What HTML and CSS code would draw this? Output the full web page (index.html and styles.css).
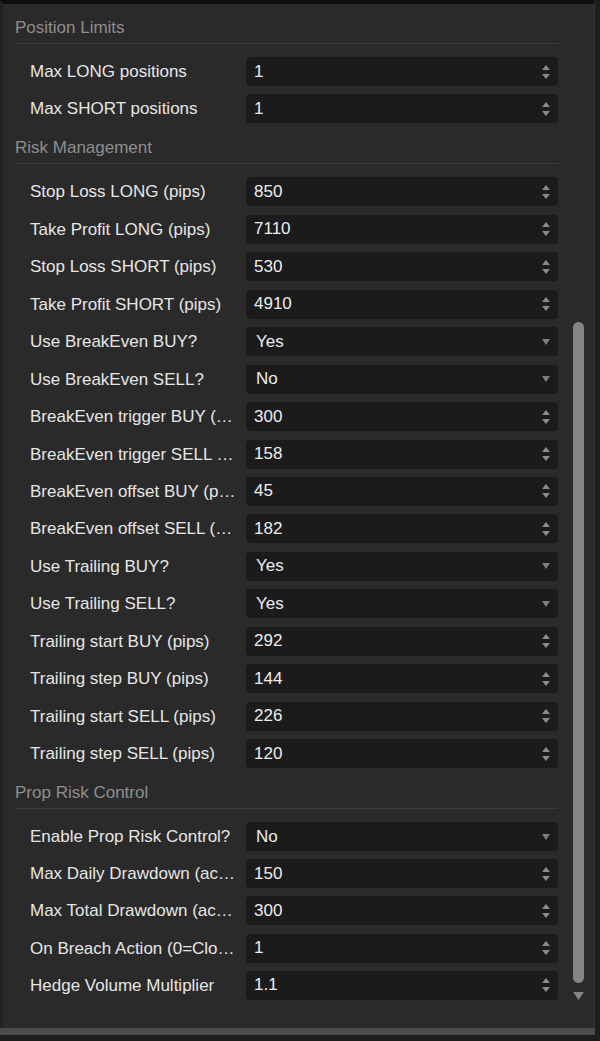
FILE: index.html
```html
<!DOCTYPE html>
<html lang="en">
<head>
    <meta charset="UTF-8">
    <meta name="viewport" content="width=device-width, initial-scale=1.0">
    <title>Bot Parameters</title>
    <link rel="stylesheet" href="styles.css">
</head>
<body>
    <div class="window">
        <div class="content">
            <div class="section">
                <div class="section-title">Position Limits</div>
                <div class="rows">
                    <div class="label">Max LONG positions</div>
                    <div class="field num"><span>1</span><svg class="spin" viewBox="0 0 10 16"><polygon points="1,6 5,1 9,6"/><polygon points="1,10 5,15 9,10"/></svg></div>
                    <div class="label">Max SHORT positions</div>
                    <div class="field num"><span>1</span><svg class="spin" viewBox="0 0 10 16"><polygon points="1,6 5,1 9,6"/><polygon points="1,10 5,15 9,10"/></svg></div>
                </div>
            </div>
            <div class="section">
                <div class="section-title">Risk Management</div>
                <div class="rows">
                    <div class="label">Stop Loss LONG (pips)</div>
                    <div class="field num"><span>850</span><svg class="spin" viewBox="0 0 10 16"><polygon points="1,6 5,1 9,6"/><polygon points="1,10 5,15 9,10"/></svg></div>
                    <div class="label">Take Profit LONG (pips)</div>
                    <div class="field num"><span>7110</span><svg class="spin" viewBox="0 0 10 16"><polygon points="1,6 5,1 9,6"/><polygon points="1,10 5,15 9,10"/></svg></div>
                    <div class="label">Stop Loss SHORT (pips)</div>
                    <div class="field num"><span>530</span><svg class="spin" viewBox="0 0 10 16"><polygon points="1,6 5,1 9,6"/><polygon points="1,10 5,15 9,10"/></svg></div>
                    <div class="label">Take Profit SHORT (pips)</div>
                    <div class="field num"><span>4910</span><svg class="spin" viewBox="0 0 10 16"><polygon points="1,6 5,1 9,6"/><polygon points="1,10 5,15 9,10"/></svg></div>
                    <div class="label">Use BreakEven BUY?</div>
                    <div class="field sel"><span>Yes</span><svg class="drop" viewBox="0 0 10 8"><polygon points="1,1 9,1 5,7"/></svg></div>
                    <div class="label">Use BreakEven SELL?</div>
                    <div class="field sel"><span>No</span><svg class="drop" viewBox="0 0 10 8"><polygon points="1,1 9,1 5,7"/></svg></div>
                    <div class="label">BreakEven trigger BUY (pips)</div>
                    <div class="field num"><span>300</span><svg class="spin" viewBox="0 0 10 16"><polygon points="1,6 5,1 9,6"/><polygon points="1,10 5,15 9,10"/></svg></div>
                    <div class="label">BreakEven trigger SELL (pips)</div>
                    <div class="field num"><span>158</span><svg class="spin" viewBox="0 0 10 16"><polygon points="1,6 5,1 9,6"/><polygon points="1,10 5,15 9,10"/></svg></div>
                    <div class="label">BreakEven offset BUY (pips)</div>
                    <div class="field num"><span>45</span><svg class="spin" viewBox="0 0 10 16"><polygon points="1,6 5,1 9,6"/><polygon points="1,10 5,15 9,10"/></svg></div>
                    <div class="label">BreakEven offset SELL (pips)</div>
                    <div class="field num"><span>182</span><svg class="spin" viewBox="0 0 10 16"><polygon points="1,6 5,1 9,6"/><polygon points="1,10 5,15 9,10"/></svg></div>
                    <div class="label">Use Trailing BUY?</div>
                    <div class="field sel"><span>Yes</span><svg class="drop" viewBox="0 0 10 8"><polygon points="1,1 9,1 5,7"/></svg></div>
                    <div class="label">Use Trailing SELL?</div>
                    <div class="field sel"><span>Yes</span><svg class="drop" viewBox="0 0 10 8"><polygon points="1,1 9,1 5,7"/></svg></div>
                    <div class="label">Trailing start BUY (pips)</div>
                    <div class="field num"><span>292</span><svg class="spin" viewBox="0 0 10 16"><polygon points="1,6 5,1 9,6"/><polygon points="1,10 5,15 9,10"/></svg></div>
                    <div class="label">Trailing step BUY (pips)</div>
                    <div class="field num"><span>144</span><svg class="spin" viewBox="0 0 10 16"><polygon points="1,6 5,1 9,6"/><polygon points="1,10 5,15 9,10"/></svg></div>
                    <div class="label">Trailing start SELL (pips)</div>
                    <div class="field num"><span>226</span><svg class="spin" viewBox="0 0 10 16"><polygon points="1,6 5,1 9,6"/><polygon points="1,10 5,15 9,10"/></svg></div>
                    <div class="label">Trailing step SELL (pips)</div>
                    <div class="field num"><span>120</span><svg class="spin" viewBox="0 0 10 16"><polygon points="1,6 5,1 9,6"/><polygon points="1,10 5,15 9,10"/></svg></div>
                </div>
            </div>
            <div class="section">
                <div class="section-title">Prop Risk Control</div>
                <div class="rows last">
                    <div class="label">Enable Prop Risk Control?</div>
                    <div class="field sel"><span>No</span><svg class="drop" viewBox="0 0 10 8"><polygon points="1,1 9,1 5,7"/></svg></div>
                    <div class="label">Max Daily Drawdown (account %)</div>
                    <div class="field num"><span>150</span><svg class="spin" viewBox="0 0 10 16"><polygon points="1,6 5,1 9,6"/><polygon points="1,10 5,15 9,10"/></svg></div>
                    <div class="label">Max Total Drawdown (account %)</div>
                    <div class="field num"><span>300</span><svg class="spin" viewBox="0 0 10 16"><polygon points="1,6 5,1 9,6"/><polygon points="1,10 5,15 9,10"/></svg></div>
                    <div class="label">On Breach Action (0=Close, 1=Hedge)</div>
                    <div class="field num"><span>1</span><svg class="spin" viewBox="0 0 10 16"><polygon points="1,6 5,1 9,6"/><polygon points="1,10 5,15 9,10"/></svg></div>
                    <div class="label">Hedge Volume Multiplier</div>
                    <div class="field num"><span>1.1</span><svg class="spin" viewBox="0 0 10 16"><polygon points="1,6 5,1 9,6"/><polygon points="1,10 5,15 9,10"/></svg></div>
                </div>
            </div>
        </div>
        <div class="scrollbar">
            <div class="thumb"></div>
            <svg class="scroll-down" viewBox="0 0 12 9"><polygon points="0,0 12,0 6,9"/></svg>
        </div>
    </div>
    <div class="hbar"></div>
</body>
</html>
```

FILE: styles.css
```css
body {
    margin: 0;
    background: #1d1d1d;
    font-family: 'Liberation Sans', Arial, sans-serif;
    font-size: 17px;
}

.window {
    display: flex;
    width: 591px;
    height: 1024px;
    background: #2a2a2a;
    border-top: 4px solid #0e0e0e;
    border-left: 3px solid #222222;
    border-right: 1px solid #353535;
    overflow: hidden;
}

.content {
    flex: 1;
    padding: 14px 8px 0 0;
}

.section {
    margin-bottom: 15px;
}

.section-title {
    color: #8e8e8e;
    line-height: 20px;
    padding-bottom: 5px;
    margin-left: 12px;
    border-bottom: 1px solid #3b3b3b;
}

.rows {
    display: grid;
    grid-template-columns: 208px 1fr;
    column-gap: 8px;
    row-gap: 8.45px;
    margin-top: 13px;
    padding-left: 27px;
}

.rows.last {
    row-gap: 8.2px;
}

.label {
    color: #e6e6e6;
    line-height: 29px;
    white-space: nowrap;
    overflow: hidden;
    text-overflow: ellipsis;
}

.field {
    display: flex;
    align-items: center;
    justify-content: space-between;
    height: 29px;
    background: #1b1b1b;
    border-radius: 4px;
    color: #ededed;
    padding: 0 7px 0 8px;
}

.field.sel {
    padding-left: 10px;
}

.spin {
    width: 10px;
    height: 16px;
    fill: #8a8a8a;
}

.drop {
    width: 10px;
    height: 8px;
    fill: #7e7e7e;
}

.scrollbar {
    width: 28px;
    display: flex;
    flex-direction: column;
    align-items: center;
    padding-top: 318px;
}

.thumb {
    width: 11px;
    height: 661px;
    border-radius: 6px;
    background: #858585;
    margin-right: 3px;
}

.scroll-down {
    width: 11px;
    height: 8px;
    margin-top: 9px;
    margin-right: 3px;
    fill: #858585;
}

.hbar {
    height: 7px;
    width: 595px;
    background: #4b4b4b;
}
```
